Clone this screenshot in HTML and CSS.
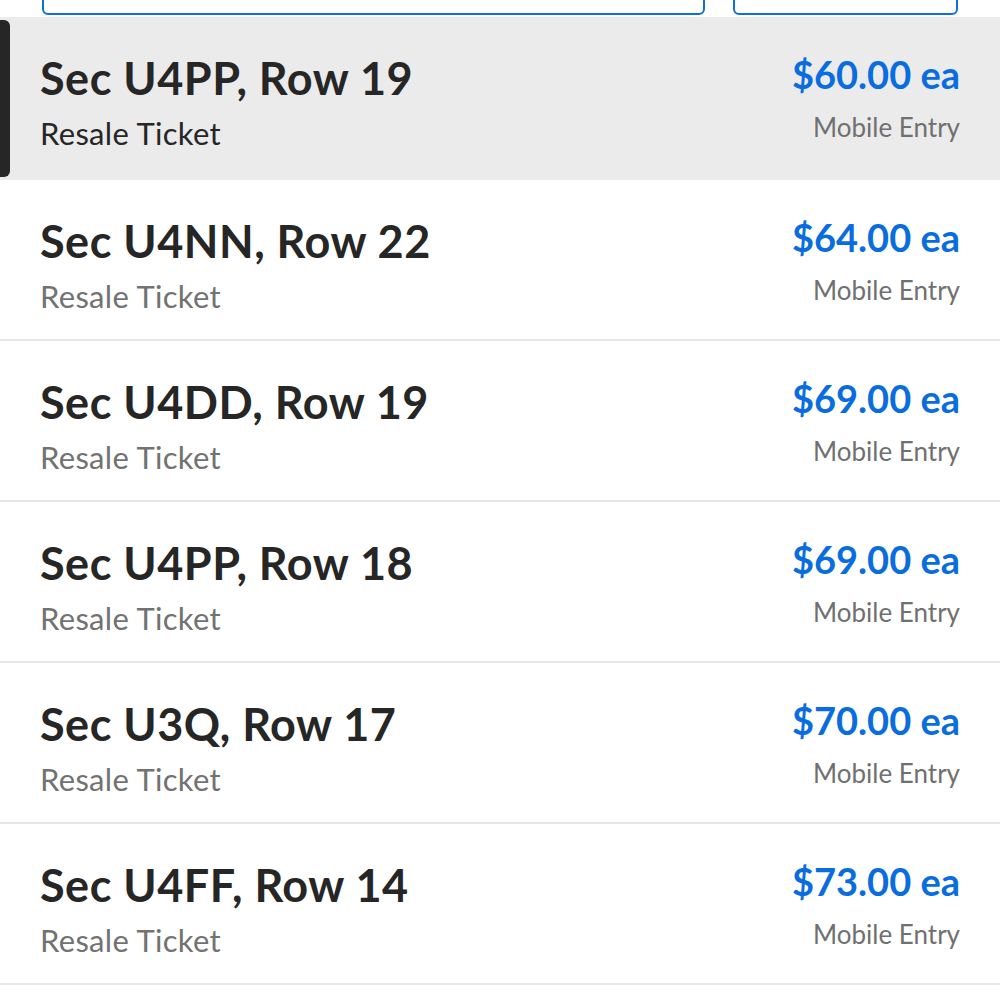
FILE: index.html
```html
<!DOCTYPE html>
<html lang="en">
<head>
<meta charset="utf-8">
<title>Tickets</title>
<link rel="stylesheet" href="styles.css">
</head>
<body>
<div class="page">
  <div class="toolbar">
    <div class="btn btn-wide"></div>
    <div class="btn btn-narrow"></div>
  </div>
  <ul class="list">
    <li class="row row-selected">
      <div class="info">
        <div class="title">Sec U4PP, Row 19</div>
        <div class="sub">Resale Ticket</div>
      </div>
      <div class="pricing">
        <div class="price">$60.00 ea</div>
        <div class="entry">Mobile Entry</div>
      </div>
    </li>
    <li class="row">
      <div class="info">
        <div class="title">Sec U4NN, Row 22</div>
        <div class="sub">Resale Ticket</div>
      </div>
      <div class="pricing">
        <div class="price">$64.00 ea</div>
        <div class="entry">Mobile Entry</div>
      </div>
    </li>
    <li class="row">
      <div class="info">
        <div class="title">Sec U4DD, Row 19</div>
        <div class="sub">Resale Ticket</div>
      </div>
      <div class="pricing">
        <div class="price">$69.00 ea</div>
        <div class="entry">Mobile Entry</div>
      </div>
    </li>
    <li class="row">
      <div class="info">
        <div class="title">Sec U4PP, Row 18</div>
        <div class="sub">Resale Ticket</div>
      </div>
      <div class="pricing">
        <div class="price">$69.00 ea</div>
        <div class="entry">Mobile Entry</div>
      </div>
    </li>
    <li class="row">
      <div class="info">
        <div class="title">Sec U3Q, Row 17</div>
        <div class="sub">Resale Ticket</div>
      </div>
      <div class="pricing">
        <div class="price">$70.00 ea</div>
        <div class="entry">Mobile Entry</div>
      </div>
    </li>
    <li class="row">
      <div class="info">
        <div class="title">Sec U4FF, Row 14</div>
        <div class="sub">Resale Ticket</div>
      </div>
      <div class="pricing">
        <div class="price">$73.00 ea</div>
        <div class="entry">Mobile Entry</div>
      </div>
    </li>
  </ul>
</div>
</body>
</html>
```

FILE: styles.css
```css
html, body {
  margin: 0;
  padding: 0;
  background: #ffffff;
}

body {
  font-family: Lato, "Noto Sans", "Liberation Sans", sans-serif;
  color: #262626;
  height: 1000px;
  overflow: hidden;
}

.toolbar {
  height: 17px;
  box-sizing: border-box;
  padding: 0 42px 2px 42px;
  display: flex;
  align-items: flex-end;
  gap: 28px;
  overflow: hidden;
}

.btn {
  height: 50px;
  flex: none;
  box-sizing: border-box;
  border: 2px solid #0f6fd8;
  border-radius: 6px;
  background: #ffffff;
}

.btn-wide {
  width: 663px;
}

.btn-narrow {
  width: 225px;
}

.list {
  list-style: none;
  margin: 0;
  padding: 0;
}

.row {
  position: relative;
  display: flex;
  justify-content: space-between;
  align-items: flex-start;
  box-sizing: border-box;
  height: 161px;
  padding: 35px 40px 0 40px;
  border-bottom: 2px solid #e6e6e6;
}

.row-selected {
  height: 163px;
  background: #ebebeb;
  border-bottom: none;
}

.row-selected::before {
  content: "";
  position: absolute;
  left: 0;
  top: 3px;
  bottom: 3px;
  width: 10px;
  background: #262626;
  border-radius: 0 6px 6px 0;
}

.title {
  font-size: 45px;
  line-height: 52px;
  font-weight: 700;
  letter-spacing: 0.5px;
  color: #262626;
}

.sub {
  margin-top: 11px;
  font-size: 31px;
  line-height: 36px;
  letter-spacing: 0.3px;
  color: #727272;
}

.row-selected .sub {
  color: #262626;
}

.pricing {
  text-align: right;
}

.price {
  font-size: 38px;
  line-height: 44px;
  font-weight: 700;
  color: #0a6ddf;
}

.entry {
  margin-top: 15px;
  font-size: 26px;
  line-height: 32px;
  color: #707070;
}
```
